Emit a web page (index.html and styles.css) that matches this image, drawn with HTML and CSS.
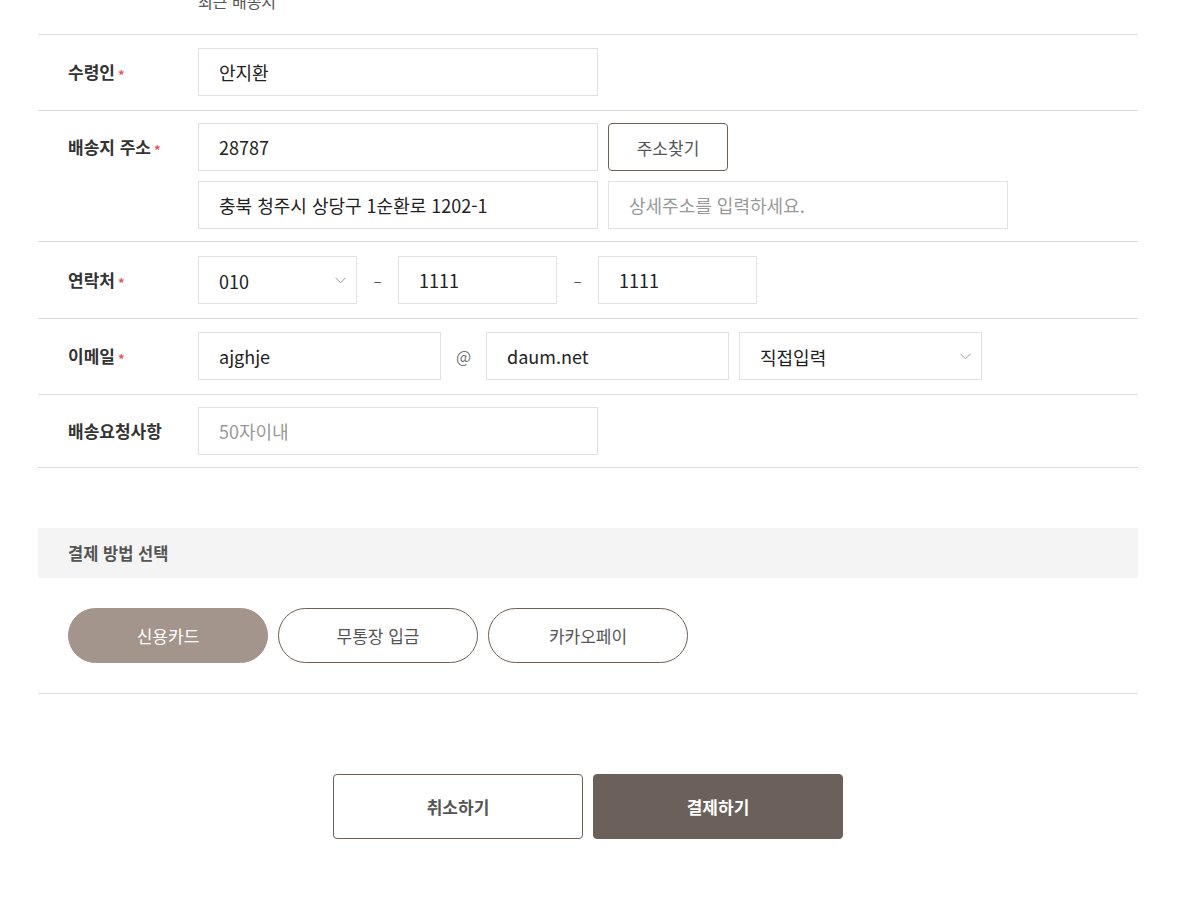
FILE: index.html
```html
<!DOCTYPE html>
<html lang="ko">
<head>
    <meta charset="UTF-8">
    <title>주문서 작성</title>
    <link rel="stylesheet" href="styles.css">
</head>
<body>
    <div class="order-wrap">
        <!-- 배송지 선택 (위쪽은 스크롤로 잘림) -->
        <div class="recent-row">
            <span class="recent-text">최근 배송지</span>
        </div>

        <div class="form-row">
            <div class="form-label">수령인<span class="req">*</span></div>
            <div class="form-field">
                <input type="text" class="inp inp-w400" value="안지환">
            </div>
        </div>

        <div class="form-row row-addr">
            <div class="form-label">배송지 주소<span class="req">*</span></div>
            <div class="form-field col">
                <div class="field-line">
                    <input type="text" class="inp inp-w400" value="28787">
                    <button class="btn-line">주소찾기</button>
                </div>
                <div class="field-line">
                    <input type="text" class="inp inp-w400" value="충북 청주시 상당구 1순환로 1202-1">
                    <input type="text" class="inp inp-w400" placeholder="상세주소를 입력하세요.">
                </div>
            </div>
        </div>

        <div class="form-row row-tel">
            <div class="form-label">연락처<span class="req">*</span></div>
            <div class="form-field">
                <div class="sel sel-w160">
                    <span>010</span>
                    <svg class="chev" width="11" height="7" viewBox="0 0 11 7"><path d="M0.5 0.8 L5.5 5.8 L10.5 0.8" fill="none" stroke="#999" stroke-width="1"/></svg>
                </div>
                <span class="sep">–</span>
                <input type="text" class="inp inp-w160" value="1111">
                <span class="sep">–</span>
                <input type="text" class="inp inp-w160" value="1111">
            </div>
        </div>

        <div class="form-row">
            <div class="form-label">이메일<span class="req">*</span></div>
            <div class="form-field">
                <input type="text" class="inp inp-w244" value="ajghje">
                <span class="sep at">@</span>
                <input type="text" class="inp inp-w244" value="daum.net">
                <div class="sel sel-w244 ml10">
                    <span>직접입력</span>
                    <svg class="chev" width="11" height="7" viewBox="0 0 11 7"><path d="M0.5 0.8 L5.5 5.8 L10.5 0.8" fill="none" stroke="#999" stroke-width="1"/></svg>
                </div>
            </div>
        </div>

        <div class="form-row row-memo">
            <div class="form-label">배송요청사항</div>
            <div class="form-field">
                <input type="text" class="inp inp-w400" placeholder="50자이내">
            </div>
        </div>

        <!-- 결제 방법 -->
        <div class="pay-section">
            <h3 class="pay-title">결제 방법 선택</h3>
            <div class="pay-methods">
                <button class="pay-btn active">신용카드</button>
                <button class="pay-btn">무통장 입금</button>
                <button class="pay-btn">카카오페이</button>
            </div>
        </div>

        <div class="order-btns">
            <button class="btn-cancel">취소하기</button>
            <button class="btn-submit">결제하기</button>
        </div>
    </div>
</body>
</html>
```

FILE: styles.css
```css
body {
    margin: 0;
    font-family: "Noto Sans CJK KR", "Noto Sans", sans-serif;
    color: #333;
    background: #fff;
}

.order-wrap {
    width: 1100px;
    margin-left: 38px;
}

/* 최근 배송지 줄 */
.recent-row {
    margin-top: -10px;
    height: 45px;
    padding-left: 160px;
    border-bottom: 1px solid #ddd;
    box-sizing: border-box;
    line-height: 22px;
}

.recent-text {
    font-size: 16px;
    color: #555;
}

/* 폼 줄 */
.form-row {
    display: flex;
    align-items: flex-start;
    padding: 13px 0 12px;
    border-bottom: 1px solid #ddd;
}

.form-row.row-addr { padding: 12px 0; }
.form-row.row-tel { padding: 14px 0 12px; }
.form-row.row-memo { padding: 12px 0; }

.form-label {
    width: 160px;
    flex-shrink: 0;
    padding-left: 30px;
    box-sizing: border-box;
    line-height: 48px;
    font-size: 17px;
    font-weight: bold;
    color: #333;
}

.req {
    color: #e8585b;
    font-size: 13px;
    margin-left: 3px;
    position: relative;
    top: 1px;
}

.form-field {
    display: flex;
    align-items: center;
}

.form-field.col {
    flex-direction: column;
    align-items: flex-start;
    gap: 10px;
}

.field-line {
    display: flex;
    gap: 10px;
}

.inp {
    height: 48px;
    border: 1px solid #e1e1e1;
    box-sizing: border-box;
    padding: 0 20px;
    font-family: inherit;
    font-size: 18px;
    color: #222;
    outline: none;
    margin: 0;
}

.inp::placeholder {
    color: #999;
}

.inp-w400 { width: 400px; }
.inp-w160 { width: 159px; }
.inp-w244 { width: 243px; }

.sel {
    height: 48px;
    border: 1px solid #e1e1e1;
    box-sizing: border-box;
    padding: 0 10px 0 20px;
    display: flex;
    align-items: center;
    justify-content: space-between;
    font-size: 18px;
    color: #222;
}

.sel span {
    position: relative;
    top: 1px;
}

.sel-w160 { width: 159px; }
.sel-w244 { width: 243px; }
.ml10 { margin-left: 10px; }

.chev {
    display: block;
}

.sep {
    width: 41px;
    text-align: center;
    font-size: 15px;
    color: #555;
}

.sep.at {
    width: 45px;
    font-size: 16px;
    color: #777;
}

.btn-line {
    width: 120px;
    height: 48px;
    background: #fff;
    border: 1px solid #6b5f58;
    border-radius: 4px;
    font-family: inherit;
    font-size: 17px;
    color: #555;
    cursor: pointer;
}

/* 결제 방법 */
.pay-section {
    margin-top: 60px;
    border-bottom: 1px solid #ddd;
}

.pay-title {
    margin: 0;
    height: 50px;
    line-height: 50px;
    background: #f4f4f4;
    padding-left: 30px;
    font-size: 16.5px;
    font-weight: bold;
    color: #555;
}

.pay-methods {
    display: flex;
    gap: 10px;
    padding: 30px 30px;
}

.pay-btn {
    width: 200px;
    height: 55px;
    border: 1px solid #6b5f58;
    border-radius: 28px;
    background: #fff;
    font-family: inherit;
    font-size: 17px;
    color: #555;
    cursor: pointer;
}

.pay-btn.active {
    background: #a3958b;
    border-color: #a3958b;
    color: #fff;
}

/* 하단 버튼 */
.order-btns {
    display: flex;
    justify-content: center;
    gap: 10px;
    margin-top: 80px;
}

.order-btns button {
    width: 250px;
    height: 65px;
    border-radius: 4px;
    font-family: inherit;
    font-size: 17px;
    font-weight: bold;
    cursor: pointer;
}

.btn-cancel {
    background: #fff;
    border: 1px solid #6b5f58;
    color: #555;
}

.btn-submit {
    background: #6b615a;
    border: 1px solid #6b615a;
    color: #fff;
}
```
